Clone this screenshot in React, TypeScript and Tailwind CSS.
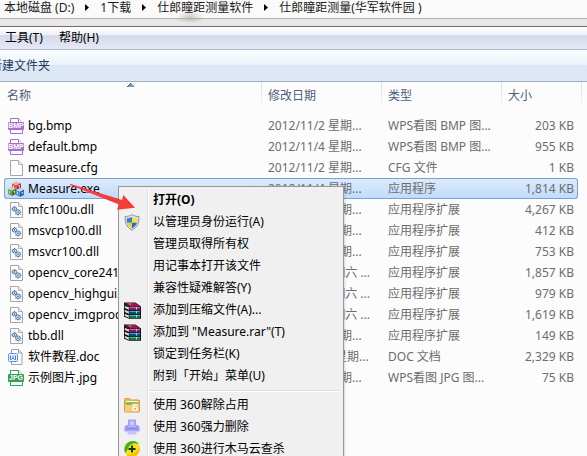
import { Fragment, type ReactNode } from 'react';

type FileKind = 'bmp' | 'blank' | 'exe' | 'dll' | 'doc' | 'jpg';

interface FileRow {
  name: string;
  kind: FileKind;
  date: string;
  type: string;
  size: string;
}

const CRUMBS = ['本地磁盘 (D:)', '1下载', '仕郎瞳距测量软件', '仕郎瞳距测量(华军软件园 )'];

const FILES: FileRow[] = [
  { name: 'bg.bmp', kind: 'bmp', date: '2012/11/2 星期...', type: 'WPS看图 BMP 图...', size: '203 KB' },
  { name: 'default.bmp', kind: 'bmp', date: '2012/11/4 星期...', type: 'WPS看图 BMP 图...', size: '955 KB' },
  { name: 'measure.cfg', kind: 'blank', date: '2012/11/2 星期...', type: 'CFG 文件', size: '1 KB' },
  { name: 'Measure.exe', kind: 'exe', date: '2012/11/4 星期...', type: '应用程序', size: '1,814 KB' },
  { name: 'mfc100u.dll', kind: 'dll', date: '2011/2/19 星期...', type: '应用程序扩展', size: '4,267 KB' },
  { name: 'msvcp100.dll', kind: 'dll', date: '2011/2/19 星期...', type: '应用程序扩展', size: '412 KB' },
  { name: 'msvcr100.dll', kind: 'dll', date: '2011/2/19 星期...', type: '应用程序扩展', size: '753 KB' },
  { name: 'opencv_core241.dll', kind: 'dll', date: '2012/6/2 星期六 ...', type: '应用程序扩展', size: '1,857 KB' },
  { name: 'opencv_highgui241.dll', kind: 'dll', date: '2012/6/2 星期六 ...', type: '应用程序扩展', size: '979 KB' },
  { name: 'opencv_imgproc241.dll', kind: 'dll', date: '2012/6/2 星期六 ...', type: '应用程序扩展', size: '1,619 KB' },
  { name: 'tbb.dll', kind: 'dll', date: '2012/5/29 星期...', type: '应用程序扩展', size: '149 KB' },
  { name: '软件教程.doc', kind: 'doc', date: '2012/11/12 星期...', type: 'DOC 文档', size: '2,329 KB' },
  { name: '示例图片.jpg', kind: 'jpg', date: '2012/11/4 星期...', type: 'WPS看图 JPG 图...', size: '75 KB' },
];

const SELECTED = 'Measure.exe';

function Page({ children }: { children?: ReactNode }) {
  return (
    <svg viewBox="0 0 16 16" className="h-4 w-4 shrink-0" aria-hidden="true">
      <path d="M2.5 .5h8l4 4v11h-12z" fill="#fcfcfc" stroke="#a6a6a6" />
      <path d="M10.5 .5v4h4" fill="#e9e9e9" stroke="#b4b4b4" />
      {children}
    </svg>
  );
}

function ImageFile({ label, color }: { label: string; color: string }) {
  return (
    <svg viewBox="0 0 16 16" className="h-4 w-4 shrink-0" aria-hidden="true">
      <path d="M2.5 5V.5h8l4 4M2.5 11v4.500h12V11" fill="#fff" stroke={color} />
      <path d="M10.500 .5v4h4" fill="#fff" stroke={color} />
      <rect x="0" y="4" width="16" height="8" rx="1" fill={color} />
      <text
        x="8"
        y="10.400"
        textAnchor="middle"
        fontSize="7"
        fontWeight="700"
        fill="#fff"
        fontFamily="'Liberation Sans', sans-serif"
      >
        {label}
      </text>
    </svg>
  );
}

function FileIcon({ kind }: { kind: FileKind }) {
  switch (kind) {
    case 'bmp':
      return <ImageFile label="BMP" color="#aa6fce" />;
    case 'jpg':
      return <ImageFile label="JPG" color="#35a055" />;
    case 'blank':
      return <Page />;
    case 'dll':
      return (
        <Page>
          <g fill="#e6f0f9" stroke="#4a78a6">
            <circle cx="6.500" cy="7" r="2" />
            <circle cx="10" cy="10.200" r="2.300" />
          </g>
          <path
            d="M6.500 4v1M3.500 7h1M4.400 4.900l.7.700M8.600 4.900l-.7.700M4.400 9.100l.7-.7M13.300 10.200h-1M10 13.500v-1M12.300 7.900l-.7.700M12.300 12.500l-.7-.7M7.700 12.500l.7-.7"
            stroke="#4a78a6"
          />
          <circle cx="6.500" cy="7" r=".7" fill="#2d557f" />
          <circle cx="10" cy="10.200" r=".8" fill="#2d557f" />
        </Page>
      );
    case 'doc':
      return (
        <svg viewBox="0 0 16 16" className="h-4 w-4 shrink-0" aria-hidden="true">
          <path d="M3.500 .5h7l3.500 3.500v11.500H3.500z" fill="#fff" stroke="#9aa0a8" />
          <path d="M10.500 .5v3.500h3.500" fill="none" stroke="#9aa0a8" />
          <rect x=".5" y="4.500" width="9" height="8" rx="1" fill="#eef4ff" stroke="#5b92f0" />
          <path d="M2.500 6.500v4h1l1.500-1.500 1.500 1.500h1v-4M5 6.500v2.500" fill="none" stroke="#3f7ce6" />
        </svg>
      );
    case 'exe':
      return (
        <svg viewBox="0 0 16 16" className="h-4 w-4 shrink-0" aria-hidden="true">
          <path d="M4 2.500v5l4.500 2v-5.500z" fill="#e0584c" />
          <path d="M8.500 4v5.500l4.500-2v-5.500z" fill="#b92f2a" />
          <path d="M4 2.500l4.500-2 4.500 1.500-4.500 2z" fill="#f6a99d" />
          <path d="M0 8v5l4 2V9.500z" fill="#6f9f52" />
          <path d="M4 9.500V15l4-2V7.500z" fill="#456f34" />
          <path d="M0 8l4-2 4 1.500-4 2z" fill="#bcdc9c" />
          <path d="M8 9v5l4 2v-5.500z" fill="#4f93d4" />
          <path d="M12 10.500V16l4-2V8.500z" fill="#2c629e" />
          <path d="M8 9l4-2 4 1.500-4 2z" fill="#b4daf6" />
          <path
            d="M5.500 4.500v2.500M10 5l1.500-.7v2.500M1.500 10v2.200M5.200 10.800l1.500-.8v2.200M9.500 11v2.200M13.300 12l1.500-.7v1.700"
            fill="none"
            stroke="#fff"
            strokeOpacity=".8"
            strokeWidth=".8"
          />
        </svg>
      );
  }
}

function ShieldIcon() {
  return (
    <svg viewBox="0 0 16 17" className="h-[17px] w-4" aria-hidden="true">
      <path d="M8 .6c2 1.400 4.500 1.900 6.900 1.900.3 6-1.400 10.700-6.900 13.800C2.500 13.200.8 8.500 1.100 2.500 3.500 2.500 6 2 8 .6z" fill="#dfe3e8" stroke="#8a9098" />
      <path d="M8 3v5.700H3.100C2.800 7.200 2.700 5.800 2.800 4.300 4.700 4.300 6.400 3.900 8 3z" fill="#2b82d2" />
      <path d="M8 3v5.700h4.900c.3-1.500.4-2.900.3-4.400C11.300 4.300 9.600 3.900 8 3z" fill="#ffd84a" />
      <path d="M8 8.700v5.700c-2.600-1.500-4.100-3.300-4.900-5.700z" fill="#f9c92a" />
      <path d="M8 8.700v5.700c2.600-1.500 4.100-3.300 4.900-5.700z" fill="#1c6fc4" />
    </svg>
  );
}

// One book of the stack; y is the top edge of its spine.
function Book({ y, light, dark }: { y: number; light: string; dark: string }) {
  return (
    <>
      <path d={`M0 ${y - 2}l5 2h12v4.500H5l-5-2z`} fill="#120c14" />
      <path d={`M.8 ${y - .4}L5 ${y + 1.300}v2.200L.8 ${y + 1.700}z`} fill="#fff" />
      <path d={`M.8 ${y + .7}L5 ${y + 2.400}`} stroke="#9a9a9a" strokeWidth=".6" />
      <path d={`M5.500 ${y + .6}H16v1.500H5.500z`} fill={light} />
      <path d={`M5.500 ${y + 2.100}H16v1.400H5.500z`} fill={dark} />
      <path d={`M12 ${y + .6}h1v2.900h-1z`} fill="#fff" fillOpacity=".6" />
    </>
  );
}

function RarIcon() {
  return (
    <svg viewBox="0 0 17 17" className="h-[17px] w-[17px]" aria-hidden="true">
      <Book y={12.300} light="#22d69a" dark="#0a8f5c" />
      <Book y={8.300} light="#36a4ea" dark="#15529c" />
      <Book y={4.300} light="#e0569e" dark="#96205e" />
      <path d="M0 .5h11.500l5.500 4H5L0 2.500z" fill="#2a0a1c" />
      <path d="M1 1h10.200l4 3H5.500z" fill="#9c1a58" />
      <path d="M4.500 1.500h2l1 1h-2z" fill="#f2c93f" />
    </svg>
  );
}

function UnlockFolderIcon() {
  return (
    <svg viewBox="0 0 16 16" className="h-4 w-4" aria-hidden="true">
      <path d="M.5 2.500q0-1 1-1h4l1 1.500h8q1 0 1 1v10q0 1-1 1h-13q-1 0-1-1z" fill="#efb65a" stroke="#d89a40" />
      <path d="M2 4h12v4H2z" fill="#fff" />
      <path d="M2 5h12v3H2z" fill="#7cc243" />
      <path d="M1 8h6l1-1.500h7v8H1z" fill="#f6cd84" />
      <path d="M9.500 10.500V9q0-1.200 1.500-1.200T12.500 9" fill="none" stroke="#fff" strokeWidth="1.200" />
      <rect x="8.500" y="10" width="5" height="4" rx="1" fill="#fff" />
      <circle cx="11" cy="12" r=".9" fill="#e0982c" />
    </svg>
  );
}

function ShredderIcon() {
  return (
    <svg viewBox="0 0 16 16" className="h-4 w-4" aria-hidden="true">
      <path d="M4 .5h8v7H4z" fill="#a9a5f6" />
      <path d="M6 2.500h4v3.500H6z" fill="#cfcdfd" />
      <path d="M2 6h2v1.500h8V6h2l1.500 2v4.500H.5V8z" fill="#a19ff5" />
      <path d="M2 9.500h12" stroke="#8583ea" />
      <path d="M3 12.500h10l-1 3H4z" fill="#c6c4fc" />
    </svg>
  );
}

function AntivirusIcon() {
  return (
    <svg viewBox="0 0 16 16" className="h-4 w-4" aria-hidden="true">
      <circle cx="8" cy="8" r="8" fill="#f8e11c" />
      <path d="M1 12C-1 6 3 0 9 0c3 0 5 1.500 6 3-4-1.500-8-.5-10 2.500-1 2-2 4.500-4 6.500z" fill="#35b32c" />
      <path d="M15.500 6c1 6-4 10-8 10-2 0-4-1-5-2.500 5 .5 10-1.500 13-7.500z" fill="#f5c400" />
      <path d="M8 4.500v7M4.500 8h7" stroke="#123f10" strokeWidth="2" />
    </svg>
  );
}

interface MenuEntry {
  label: string;
  icon?: ReactNode;
  bold?: boolean;
  divider?: boolean;
}

const MENU: MenuEntry[] = [
  { label: '打开(O)', bold: true },
  { label: '以管理员身份运行(A)', icon: <ShieldIcon /> },
  { label: '管理员取得所有权' },
  { label: '用记事本打开该文件' },
  { label: '兼容性疑难解答(Y)' },
  { label: '添加到压缩文件(A)...', icon: <RarIcon /> },
  { label: '添加到 "Measure.rar"(T)', icon: <RarIcon /> },
  { label: '锁定到任务栏(K)' },
  { label: '附到「开始」菜单(U)', divider: true },
  { label: '使用 360解除占用', icon: <UnlockFolderIcon /> },
  { label: '使用 360强力删除', icon: <ShredderIcon /> },
  { label: '使用 360进行木马云查杀', icon: <AntivirusIcon /> },
];

function ContextMenu() {
  return (
    <div
      role="menu"
      className="absolute left-[118px] top-[186px] w-[226px] border border-[#979797] bg-[#f0f0f0] py-[2px] shadow-[1px_1px_2px_rgba(0,0,0,0.15)]"
    >
      <div className="bg-[linear-gradient(90deg,#e2e3e3_50%,#ffffff_50%)] bg-[length:2px_100%] bg-[position:28px_0] bg-no-repeat">
        {MENU.map((item) => (
          <Fragment key={item.label}>
            <button
              type="button"
              role="menuitem"
              className={`flex h-[22px] w-full items-center text-left text-black ${item.bold ? 'font-bold' : ''}`}
            >
              <span className="flex w-[34px] shrink-0 pl-[5px]">{item.icon}</span>
              <span className="whitespace-nowrap">{item.label}</span>
            </button>
            {item.divider && (
              <div role="separator" className="flex h-[7px] items-center pl-[30px] pr-[2px]">
                <div className="h-[2px] w-full border-b border-white bg-[#e0e0e0]" />
              </div>
            )}
          </Fragment>
        ))}
      </div>
    </div>
  );
}

const HEAD_CELL =
  'h-7 bg-[linear-gradient(#d5e2f0,#e3ecf5_60%,#fcfcfc)] bg-[length:1px_25px] bg-no-repeat pl-[7px] text-left font-normal';

export default function App() {
  return (
    <div className="relative h-screen overflow-hidden bg-[#fcfcfc] font-['Noto_Sans','Noto_Sans_CJK_SC',sans-serif] text-[12px] leading-4">
      <nav className="flex h-[19px] items-start gap-[11px] border-b border-[#b4b0ae] bg-[radial-gradient(ellipse_14px_8px_at_190px_18px,#c9c9b8,#fafafa)] pl-1 text-[#1a1a1a]">
        {CRUMBS.map((crumb, i) => (
          <Fragment key={crumb}>
            {i > 0 && (
              <svg viewBox="0 0 4 7" className="mt-1 h-[7px] w-1 shrink-0" aria-hidden="true">
                <path d="M0 0l4 3.500L0 7z" fill="#000" />
              </svg>
            )}
            <a href="#" className="whitespace-nowrap">{crumb}</a>
          </Fragment>
        ))}
      </nav>
      <div className="h-2 border-b border-[#6d6d70] bg-[radial-gradient(ellipse_16px_4px_at_190px_0px,#c2c0b8,#ece7e7)]" />

      <div className="flex h-[23px] items-center gap-4 border-b border-[#b2bacb] bg-[linear-gradient(#ffffff,#eef1f9_8px,#d5daec_8px,#e4e8f6)] pl-[5px] text-black">
        <button type="button">工具(T)</button>
        <button type="button">帮助(H)</button>
      </div>

      <div className="flex h-8 items-center border-b border-[#a0afc3] bg-[linear-gradient(#fbfdff,#e9f3fc_15px,#dce6f4_15px,#dde8f6)] text-[#1e395b]">
        <button type="button" className="-ml-[10px]">新建文件夹</button>
      </div>

      <div className="pl-1">
        <table className="w-full table-fixed border-separate border-spacing-0">
          <colgroup>
            <col className="w-[257px]" />
            <col className="w-[120px]" />
            <col className="w-[120px]" />
            <col className="w-[77px]" />
            <col />
          </colgroup>
          <thead className="text-[#4c607a]">
            <tr>
              <th className="relative h-7 pl-[3px] text-left font-normal">
                <svg viewBox="0 0 8 4" className="absolute left-[123px] top-px h-1 w-2" aria-hidden="true">
                  <path d="M4 0l4 4H0z" fill="#6f9cba" />
                  <path d="M4 0L0 4" stroke="#3c5e72" />
                </svg>
                名称
              </th>
              <th className={HEAD_CELL}>修改日期</th>
              <th className={HEAD_CELL}>类型</th>
              <th className={HEAD_CELL}>大小</th>
              <th className="bg-[linear-gradient(#d5e2f0,#e3ecf5_60%,#fcfcfc)] bg-[length:1px_25px] bg-[position:3px_0] bg-no-repeat" />
            </tr>
          </thead>
          <tbody className="text-[#6d6d6d] before:block before:h-[5px] before:content-['']">
            {FILES.map((file) => {
              const selected = file.name === SELECTED;
              const cell = selected
                ? 'border-y border-[#7da2ce] bg-[linear-gradient(#dcebfc,#c1dbfc)]'
                : 'border-y border-transparent';
              return (
                <tr key={file.name} className="h-[21px] whitespace-nowrap leading-[19px]" aria-selected={selected}>
                  <td className={`${cell} rounded-l-[3px] border-l p-0 pl-[3px] text-black`}>
                    <div className="flex items-center gap-1">
                      <FileIcon kind={file.kind} />
                      <span>{file.name}</span>
                    </div>
                  </td>
                  <td className={`${cell} p-0 pl-[7px]`}>{file.date}</td>
                  <td className={`${cell} p-0 pl-[7px]`}>{file.type}</td>
                  <td className={`${cell} rounded-r-[3px] border-r p-0 pr-[3px] text-right`}>{file.size}</td>
                  <td className="p-0" />
                </tr>
              );
            })}
          </tbody>
        </table>
      </div>

      <ContextMenu />

      <svg
        viewBox="0 0 68 28"
        className="pointer-events-none absolute left-[69px] top-[183px] h-7 w-[68px]"
        aria-hidden="true"
      >
        <path d="M1 .8L53 17l1.300-5L66 24.700 48 26.800l2-5.300L1 2z" fill="#f73c37" />
      </svg>
    </div>
  );
}
